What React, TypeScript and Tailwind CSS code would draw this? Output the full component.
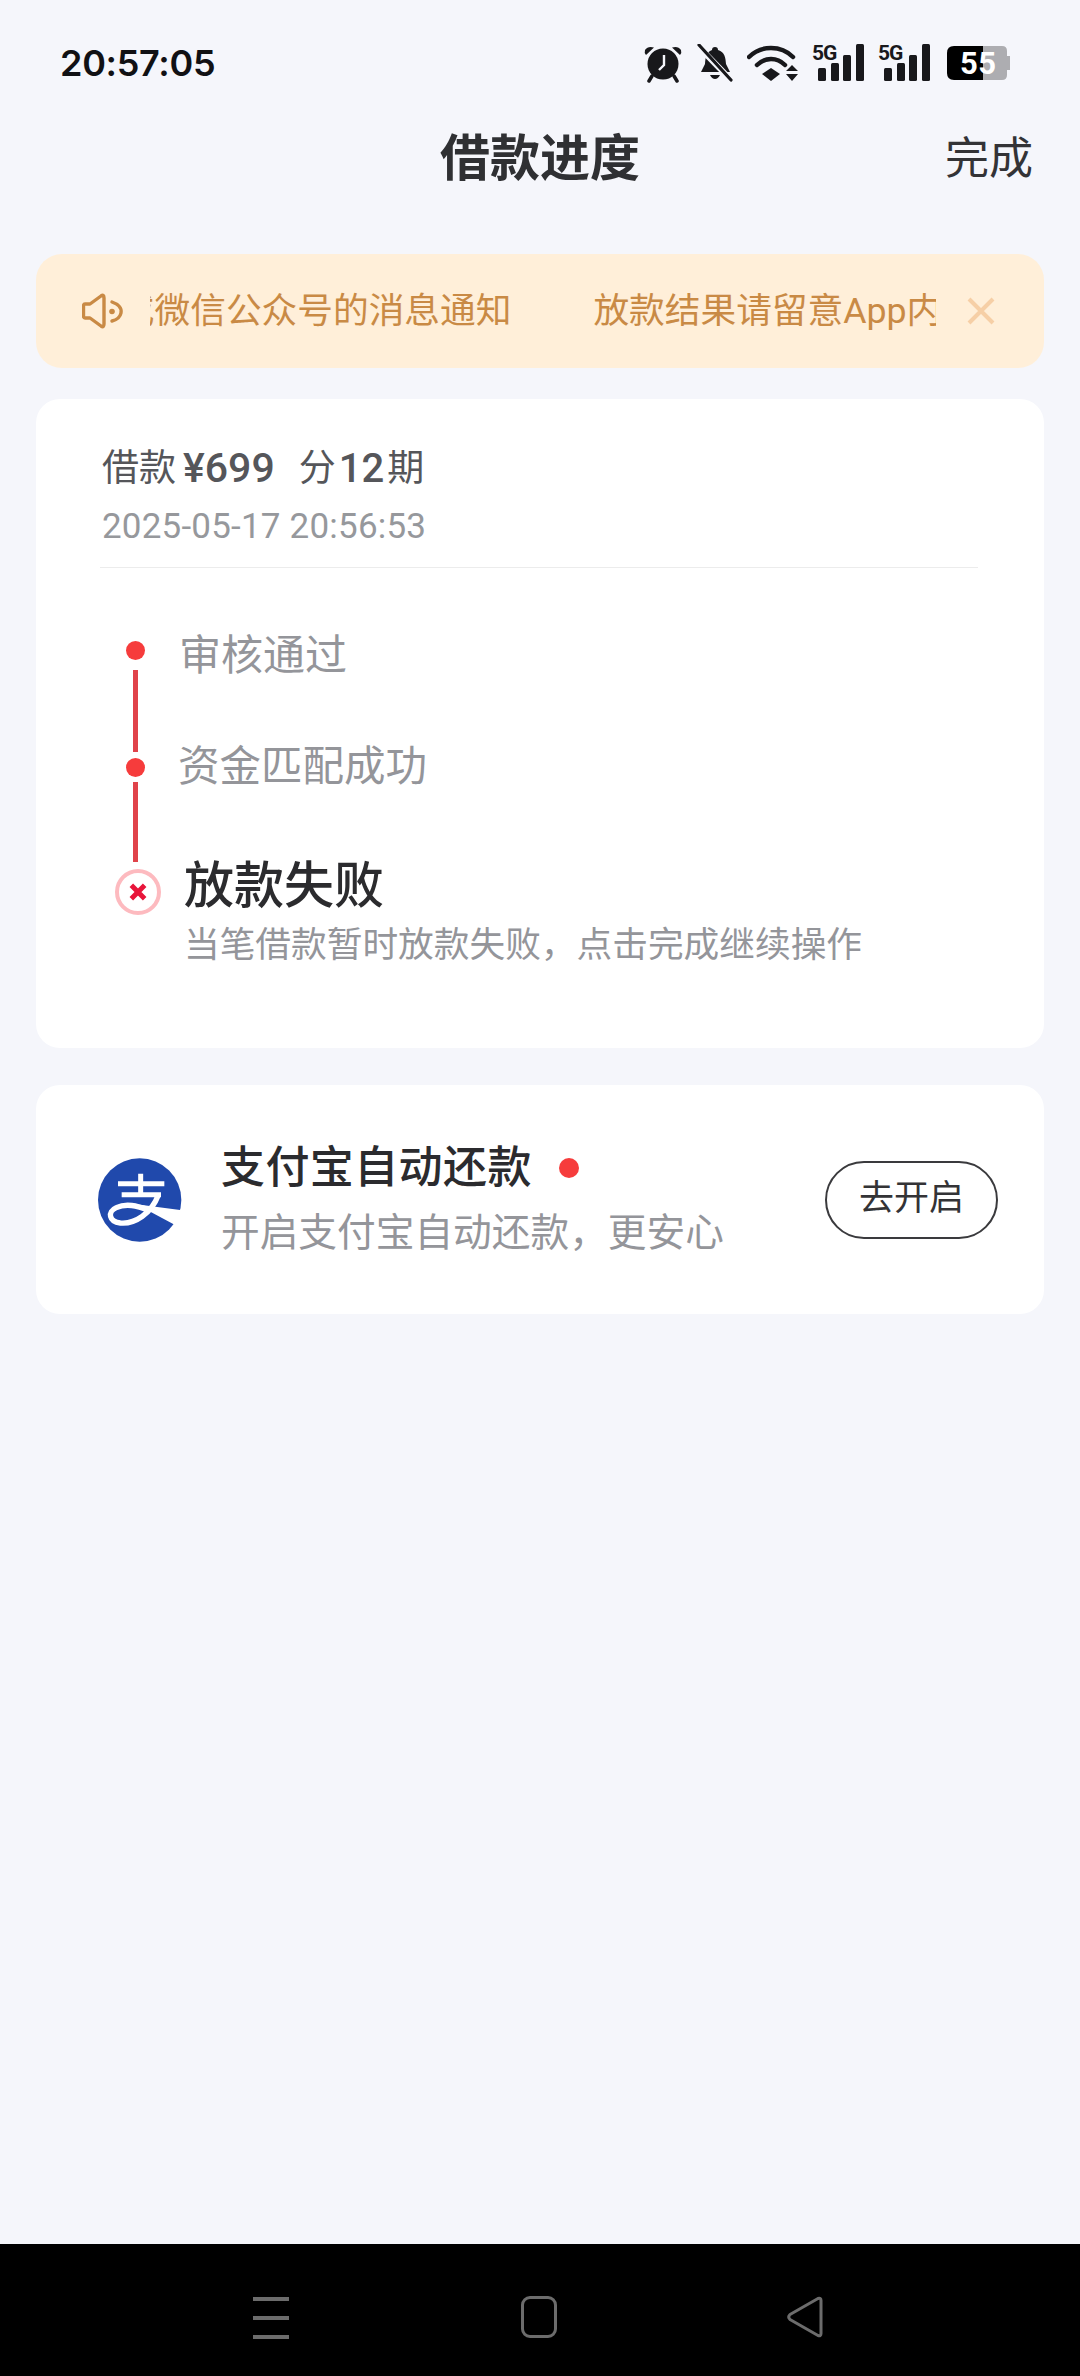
import React from "react";

function Alarm() {
  return (
    <svg width="40" height="40" viewBox="0 0 40 40" className="block">
      <circle cx="20" cy="21" r="15.5" fill="#18181b" />
      <path d="M3 12 L11 4.5 Q5 2.5 2 7 Q1 10 3 12Z M37 12 L29 4.5 Q35 2.5 38 7 Q39 10 37 12Z" fill="#18181b" />
      <path d="M9 33 L6 38 M31 33 L34 38" stroke="#18181b" strokeWidth="3.5" strokeLinecap="round" />
      <path d="M21 12 V22 L16 27" stroke="#f5f6fb" strokeWidth="2.4" fill="none" />
    </svg>
  );
}

function BellOff() {
  return (
    <svg width="38" height="38" viewBox="0 0 38 38" className="block">
      <path d="M19 3 a3 3 0 0 1 3 3 C29 8 29.500 14 30 20 L34 28 H5 L9 20 C9.500 14 10 8 16 6 a3 3 0 0 1 3 -3Z" fill="#18181b" />
      <path d="M14 31 H24 Q22 35 19 35 Q16 35 14 31Z" fill="#18181b" />
      <path d="M1 1 L36 37" stroke="#f5f6fb" strokeWidth="6" />
      <path d="M3 1 L35 36" stroke="#18181b" strokeWidth="3.2" strokeLinecap="round" />
    </svg>
  );
}

function Wifi() {
  return (
    <svg width="52" height="38" viewBox="0 0 52 38" className="block">
      <path d="M2 13 C14 1 34 1 46 13" stroke="#18181b" strokeWidth="4.500" fill="none" strokeLinecap="round" />
      <path d="M10 21 C18 13 30 13 38 21" stroke="#18181b" strokeWidth="4.500" fill="none" strokeLinecap="round" />
      <path d="M24 24 L33 30 L24 37 L15 30Z" fill="#18181b" />
      <path d="M45 21 L51 27 H39Z M45 37 L51 30 H39Z" fill="#18181b" />
    </svg>
  );
}

function Signal() {
  return (
    <div className="relative w-[52px] h-[38px]">
      <span className="absolute left-0 top-[-3px] text-[21px] leading-[24px] font-bold text-[#18181b] tracking-[-1px]">5G</span>
      <svg width="52" height="38" viewBox="0 0 52 38" className="block">
        <rect x="6" y="24" width="8" height="13" rx="1.500" fill="#18181b" />
        <rect x="19" y="19" width="8" height="18" rx="1.500" fill="#18181b" />
        <rect x="31" y="11" width="8" height="26" rx="1.500" fill="#18181b" />
        <rect x="44" y="0" width="8" height="37" rx="1.500" fill="#18181b" />
      </svg>
    </div>
  );
}

function Battery() {
  return (
    <div className="relative w-[66px] h-[36px]">
      <svg width="66" height="36" viewBox="0 0 66 36" className="block">
        <path d="M37 1 H56 Q61 1 61 6 V11 H64 V25 H61 V30 Q61 35 56 35 H37Z" fill="#adadb1" />
        <path d="M8 1 H37 V35 H8 Q1 35 1 28 V8 Q1 1 8 1Z" fill="#000000" />
      </svg>
      <span className="absolute inset-0 flex items-center pl-[14px] text-[31px] font-bold leading-none text-white tracking-[0.500px]">55</span>
    </div>
  );
}

function Speaker() {
  return (
    <svg width="42" height="36" viewBox="0 0 42 36" className="block">
      <path d="M3 11 H8 L19 3 Q22 1 22 5 V31 Q22 35 19 33 L8 25 H3 Q1.500 25 1.500 23 V13 Q1.500 11 3 11Z" fill="none" stroke="#c98a45" strokeWidth="3.400" strokeLinejoin="round" />
      <path d="M30 9 C36 11 40 15 39 20 C38 25 34 27 30 28" fill="none" stroke="#c98a45" strokeWidth="3.400" strokeLinecap="round" />
      <circle cx="30" cy="18.500" r="2.800" fill="#c98a45" />
    </svg>
  );
}

function Alipay() {
  return (
    <svg width="84" height="84" viewBox="85 113 252 252" className="block shrink-0">
      <circle cx="210" cy="239" r="125" fill="#2049ac" />
      <path d="M145 190 H284 M156 223 H274 M213 160 V223" stroke="#fff" strokeWidth="15" fill="none" />
      <path d="M266 224 C245 280 195 312 152 308 C118 304 112 274 140 262 C170 248 200 256 240 270" stroke="#fff" strokeWidth="16" fill="none" />
      <path d="M200 252 L340 270 L345 330 L312 312Z" fill="#fff" />
    </svg>
  );
}

export default function App() {
  const marquee = "放款结果请留意App内或微信公众号的消息通知";
  return (
    <div className="w-[1080px] h-[2376px] flex flex-col bg-[#f5f6fb] overflow-hidden [font-family:Roboto,'Noto_Sans_CJK_SC',sans-serif]">
      <div className="h-[126px] shrink-0 flex items-center justify-between pl-[60px] pr-[68px]">
        <span className="text-[36px] font-semibold text-[#111114] [font-family:Inter,sans-serif] tracking-[-0.300px]">20:57:05</span>
        <div className="flex items-center">
          <Alarm />
          <div className="ml-[13px]"><BellOff /></div>
          <div className="ml-[13px]"><Wifi /></div>
          <div className="ml-[13px]"><Signal /></div>
          <div className="ml-[14px]"><Signal /></div>
          <div className="ml-[16px]"><Battery /></div>
        </div>
      </div>

      <div className="h-[64px] shrink-0 relative flex items-center justify-center">
        <span className="text-[50px] font-bold text-[#2f3033] mt-[3px]">借款进度</span>
        <span className="absolute right-[47px] top-[1px] leading-[64px] text-[44px] text-[#333336]">完成</span>
      </div>

      <div className="mt-[64px] mx-[36px] h-[114px] shrink-0 rounded-[26px] bg-[#ffefd9] flex items-center pl-[46px] pr-[40px]">
        <Speaker />
        <div className="ml-[26px] w-[786px] overflow-hidden pt-[2px]">
          <div className="flex whitespace-nowrap text-[35.700px] text-[#c98a45] gap-[82px] ml-[-380px]">
            <span>{marquee}</span>
            <span>{marquee}</span>
          </div>
        </div>
        <svg width="28" height="28" viewBox="0 0 28 28" className="ml-[31px] block">
          <path d="M2 2 L26 26 M26 2 L2 26" stroke="#f6cfa6" strokeWidth="4" />
        </svg>
      </div>

      <div className="mt-[31px] mx-[36px] h-[649px] shrink-0 rounded-[24px] bg-white px-[66px] pt-[44px]">
        <div className="flex items-center h-[52px] text-[37px] text-[#55565a]">
          <span>借款</span>
          <span className="ml-[7px] text-[41px] font-medium">¥699</span>
          <span className="ml-[24px]">分</span>
          <span className="ml-[3px] text-[40px] font-medium">12</span>
          <span className="ml-[3px]">期</span>
        </div>
        <div className="h-[56px] text-[35px] leading-[64px] text-[#96989c] tracking-[0.200px]">2025-05-17 20:56:53</div>
        <div className="mt-[16px] h-[1px] bg-[#ececec] -ml-[2px] w-[878px]" />

        <div className="mt-[59px] flex flex-col">
          <div className="flex items-center h-[56px]">
            <div className="w-[66px] flex justify-center"><div className="w-[19px] h-[19px] rounded-full bg-[#f63c3c] -mt-[10px]" /></div>
            <span className="text-[42px] text-[#94959a] ml-[11px]">审核通过</span>
          </div>
          <div className="w-[66px] flex justify-center -mt-[13px] h-[82px]"><div className="w-[5px] h-[82px] bg-[#e0434a]" /></div>
          <div className="flex items-center h-[56px] -mt-[13px]">
            <div className="w-[66px] flex justify-center"><div className="w-[19px] h-[19px] rounded-full bg-[#f63c3c]" /></div>
            <span className="text-[41.500px] text-[#94959a] ml-[10px]">资金匹配成功</span>
          </div>
          <div className="w-[66px] flex justify-center -mt-[13px] h-[80px]"><div className="w-[5px] h-[80px] bg-[#e0434a]" /></div>
          <div className="flex -mt-[8px]">
            <div className="w-[66px] pl-[13px] pt-[15px] shrink-0">
              <div className="w-[46px] h-[46px] rounded-full border-[4px] border-[#fdbabf] flex items-center justify-center">
                <svg width="20" height="20" viewBox="0 0 18 18" className="block">
                  <path d="M3 3 L15 15 M15 3 L3 15" stroke="#e8153a" strokeWidth="4.500" />
                </svg>
              </div>
            </div>
            <div className="flex flex-col ml-[16px]">
              <span className="text-[50px] leading-[60px] mt-[2px] font-medium text-[#2b2b2e]">放款失败</span>
              <span className="text-[35.700px] leading-[50px] mt-[4px] text-[#94959a]">当笔借款暂时放款失败，点击完成继续操作</span>
            </div>
          </div>
        </div>
      </div>

      <div className="mt-[37px] mx-[36px] h-[229px] shrink-0 rounded-[24px] bg-white flex items-center pl-[62px] pr-[46px]">
        <Alipay />
        <div className="ml-[39px] flex-1 flex flex-col">
          <div className="flex items-center mt-[-1px]">
            <span className="text-[44px] leading-[56px] font-medium text-[#2b2b2e] tracking-[0.400px]">支付宝自动还款</span>
            <span className="ml-[27px] w-[20px] h-[20px] rounded-full bg-[#f63c3c]" />
          </div>
          <span className="text-[38.700px] leading-[50px] mt-[12px] text-[#94959a]">开启支付宝自动还款，更安心</span>
        </div>
        <div className="w-[173px] h-[78px] rounded-full border-[2px] border-[#3a3a3d] flex items-center justify-center text-[35px] text-[#333336]">去开启</div>
      </div>

      <div className="flex-1" />

      <div className="h-[132px] shrink-0 bg-black relative">
        <div className="absolute left-[253px] top-[53px] w-[36px] flex flex-col gap-[15.500px]">
          <div className="h-[3.500px] bg-[#6c6c6c]" />
          <div className="h-[3.500px] bg-[#6c6c6c]" />
          <div className="h-[3.500px] bg-[#6c6c6c]" />
        </div>
        <div className="absolute left-[521px] top-[52px] w-[36px] h-[42px] rounded-[9px] border-[3px] border-[#6c6c6c]" />
        <svg width="38" height="42" viewBox="0 0 38 42" className="absolute left-[786px] top-[52px]">
          <path d="M4 18.500 L32 2.500 Q35 1.500 35 4.500 V37.500 Q35 40.500 32 39.500 L4 23.500 Q1.500 21 4 18.500Z" fill="none" stroke="#6c6c6c" strokeWidth="3" strokeLinejoin="round" />
        </svg>
      </div>
    </div>
  );
}
